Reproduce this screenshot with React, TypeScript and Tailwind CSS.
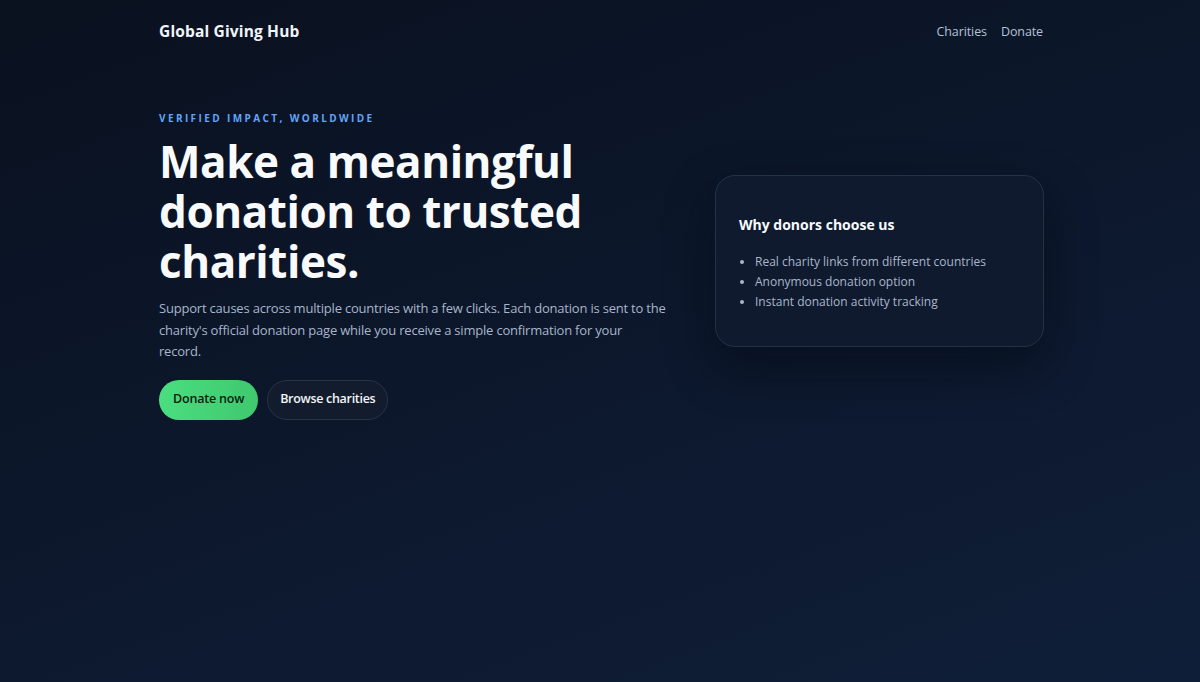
export default function App() {
  const reasons = [
    'Real charity links from different countries',
    'Anonymous donation option',
    'Instant donation activity tracking',
  ]

  return (
    <div
      className="min-h-[682px] w-full bg-[linear-gradient(160deg,#0a111f_0%,#0c172b_45%,#0f1e38_100%)] text-white"
      style={{ fontFamily: '"Open Sans", "Noto Sans", sans-serif' }}
    >
      <div className="mx-auto max-w-[886px] pl-[2px]">
        <header className="flex h-[63px] items-center justify-between">
          <a className="text-[15.5px] font-bold tracking-[0.01em] text-[#f1f5f9]">Global Giving Hub</a>
          <nav className="flex gap-[14px] pt-[1px] text-[12.5px] tracking-[-0.1px] text-[#b4c1d6]">
            <a>Charities</a>
            <a>Donate</a>
          </nav>
        </header>

        <main className="mt-[48px] grid grid-cols-[506px_329px] items-start gap-[50px]">
          <section>
            <p className="text-[10px] font-bold uppercase tracking-[0.24em] text-[#60a5fa]">
              Verified impact, worldwide
            </p>
            <h1 className="mt-[10px] text-[44px] font-bold leading-[50px] tracking-[-0.01em] text-[#f8fafc]">
              Make a meaningful donation to trusted charities.
            </h1>
            <p className="mt-[12px] w-[514px] text-[13px] leading-[21.5px] tracking-[-0.2px] text-[#a8b5ca]">
              Support causes across multiple countries with a few clicks. Each donation is sent to the charity's
              official donation page while you receive a simple confirmation for your
              <br />
              record.
            </p>
            <div className="mt-[17px] flex gap-[9px]">
              <button className="h-[40px] rounded-full bg-[linear-gradient(90deg,#4ade80,#40c86e)] px-[14px] text-[12.5px] font-semibold tracking-[-0.2px] text-[#07210f]">
                Donate now
              </button>
              <button className="h-[40px] rounded-full border border-[#273449] bg-[#131c2c] px-[12px] text-[12.5px] font-semibold tracking-[-0.3px] text-[#f1f5f9]">
                Browse charities
              </button>
            </div>
          </section>

          <aside className="mt-[64px] rounded-[20px] border border-[#243149] bg-[#0f1a2f] px-[23px] pb-[34px] pt-[38px] shadow-[0_20px_50px_rgba(2,6,16,0.45)]">
            <h2 className="text-[14px] font-bold text-[#f8fafc]">Why donors choose us</h2>
            <ul className="mt-[17px] list-disc pl-[16px] text-[12px] leading-[20px] text-[#aab6ca] marker:text-[#aab6ca]">
              {reasons.map((r) => (
                <li key={r}>{r}</li>
              ))}
            </ul>
          </aside>
        </main>
      </div>
    </div>
  )
}
